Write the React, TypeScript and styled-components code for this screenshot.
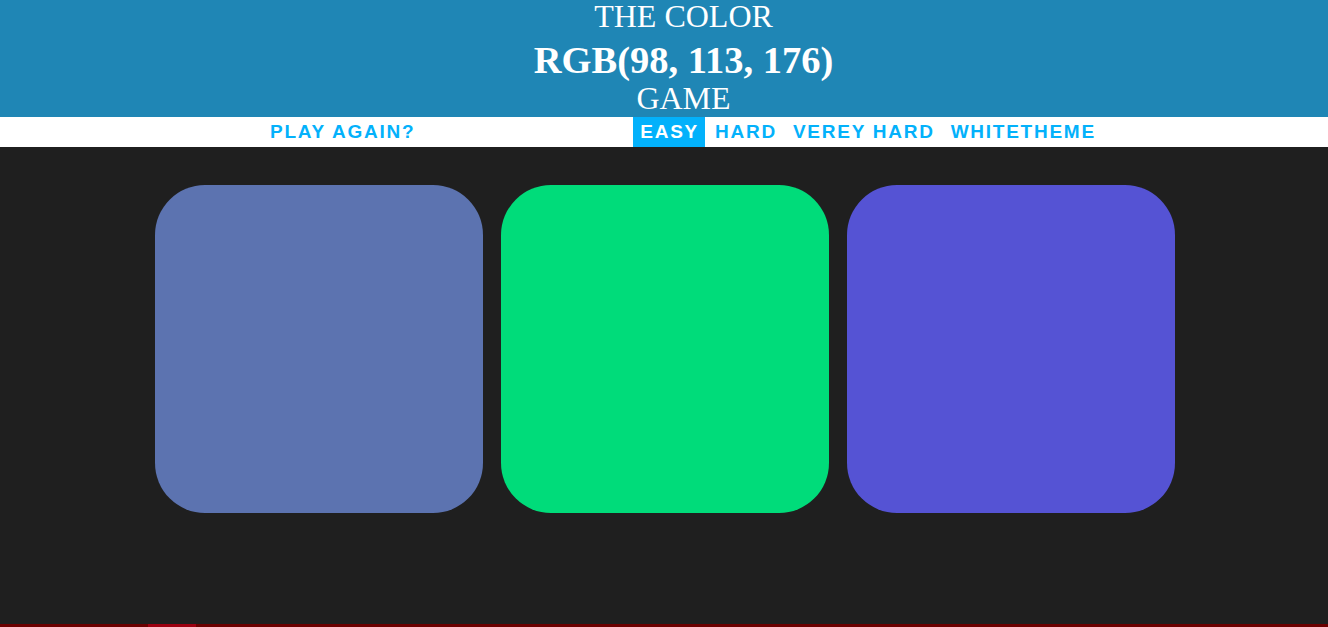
import * as React from 'react'
import {useState} from "react";
import styled, {createGlobalStyle} from 'styled-components';

const GlobalStyle = createGlobalStyle`
  html, body {
    margin: 0;
    padding: 0;
    background-color: #1f1f1f;
  }
`;

const Page = styled.div`
  min-height: 100vh;
  display: flex;
  flex-direction: column;
  background-color: #1f1f1f;
`;

const Header = styled.h1`
  margin: 0;
  padding: 0 0 8px 39px;
  background-color: #1f86b5;
  color: #ffffff;
  font-family: "Liberation Serif", "Times New Roman", serif;
  font-weight: normal;
  text-align: center;
  text-transform: uppercase;
`;

const TitleLine = styled.div<{ $lh: number }>`
  font-size: 32px;
  line-height: ${p => p.$lh}px;
`;

const ColorDisplay = styled.div`
  font-size: 38.5px;
  font-weight: bold;
  line-height: 54px;
`;

const Stripe = styled.nav`
  display: flex;
  align-items: stretch;
  height: 30px;
  padding-left: 263px;
  background-color: #ffffff;
  font-family: "Liberation Sans", Arial, sans-serif;
`;

const NavButton = styled.button<{ $selected?: boolean }>`
  display: flex;
  align-items: center;
  border: none;
  margin: 0;
  padding: 0 6px 0 7px;
  background-color: ${p => p.$selected ? '#03b1fb' : '#ffffff'};
  color: ${p => p.$selected ? '#ffffff' : '#03b1fb'};
  font-family: inherit;
  font-size: 19px;
  font-weight: bold;
  letter-spacing: 1.75px;
  text-transform: uppercase;
  cursor: pointer;
`;

const Message = styled.span`
  width: 212px;
`;

const Modes = styled.div`
  display: flex;
  gap: 3px;
`;

const Board = styled.main`
  flex: 1;
  display: flex;
  justify-content: center;
  align-items: flex-start;
  gap: 18px;
  padding: 38px 0 0 1px;
`;

const Square = styled.div`
  width: 328px;
  height: 328px;
  border-radius: 50px;
`;

const Bottom = styled.div`
  display: flex;
  height: 3px;
  padding-left: 148px;
  background-color: #6b0000;
`;

const Thumb = styled.div`
  width: 48px;
  background-color: #9c0010;
`;

const title = 'rgb(98, 113, 176)';
const colors = ['rgb(92, 115, 176)', 'rgb(0, 220, 122)', 'rgb(85, 83, 212)'];
const modes = ['easy', 'hard', 'verey hard', 'whitetheme'];

export default function App() {
  const [mode, setMode] = useState('easy');

  return (
    <Page>
      <GlobalStyle/>
      <Header>
        <TitleLine $lh={33}>The Color</TitleLine>
        <ColorDisplay>{title}</ColorDisplay>
        <TitleLine $lh={22}>Game</TitleLine>
      </Header>
      <Stripe>
        <NavButton>Play Again?</NavButton>
        <Message/>
        <Modes>
          {modes.map(m => (
            <NavButton key={m} $selected={m === mode} onClick={() => setMode(m)}>{m}</NavButton>
          ))}
        </Modes>
      </Stripe>
      <Board>
        {colors.map(c => <Square key={c} style={{backgroundColor: c}}/>)}
      </Board>
      <Bottom>
        <Thumb/>
      </Bottom>
    </Page>
  );
}
